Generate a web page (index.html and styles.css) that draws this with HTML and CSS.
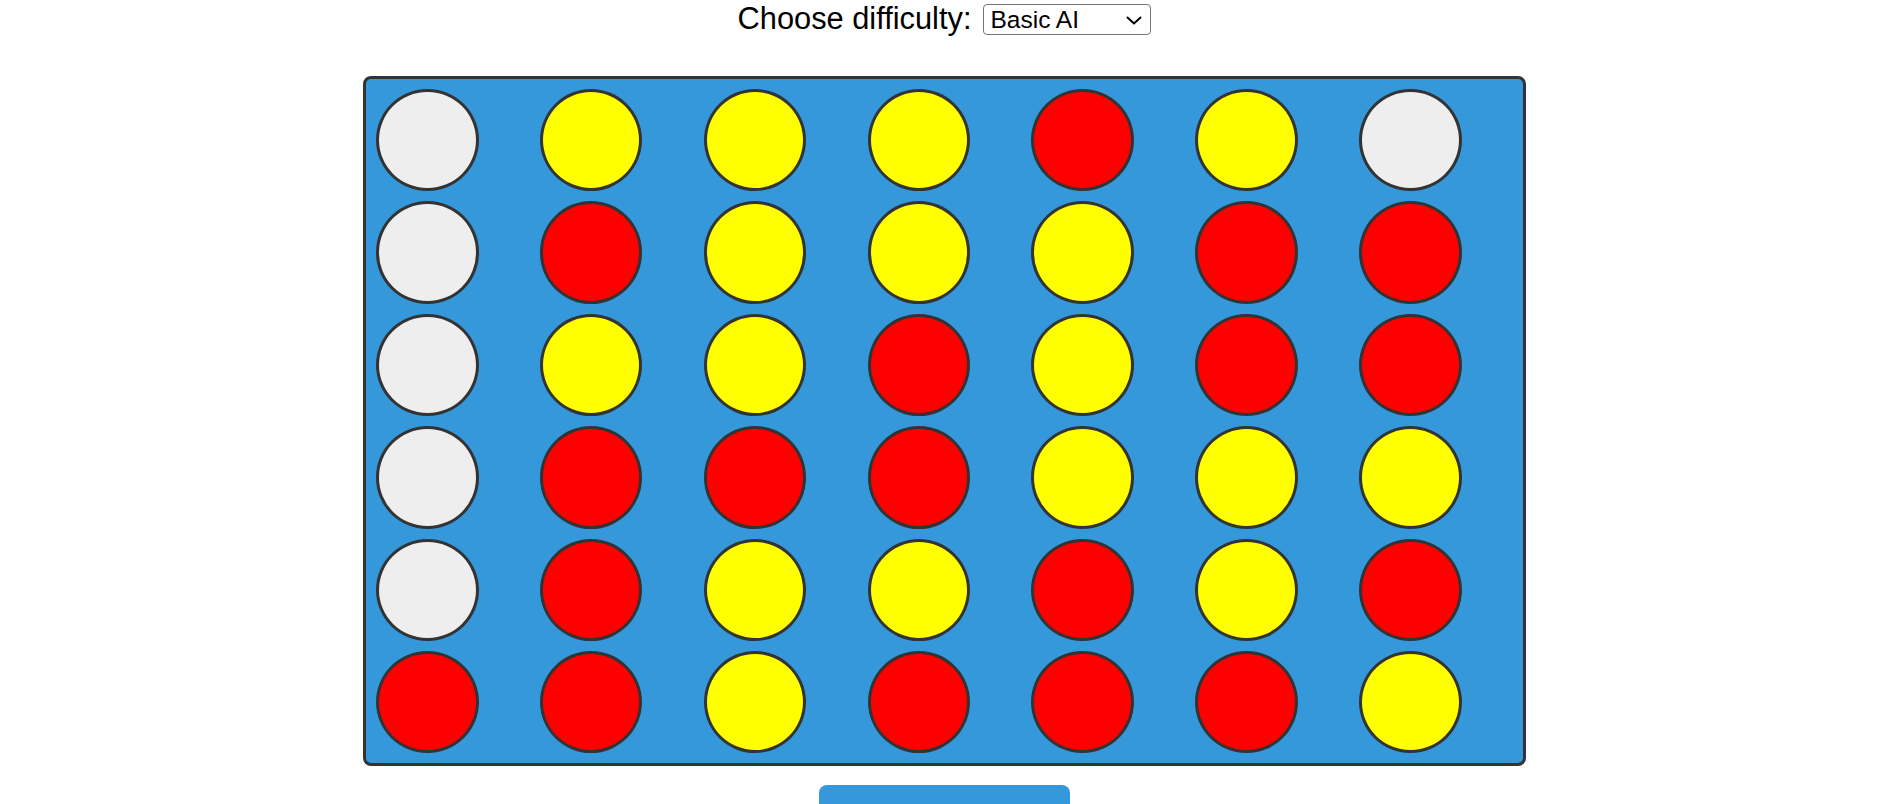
FILE: index.html
```html
<!DOCTYPE html>
<html lang="en">
<head>
<meta charset="utf-8">
<title>Connect Four</title>
<link rel="stylesheet" href="styles.css">
</head>
<body>
<div class="controls">
  <label class="label" for="difficulty">Choose difficulty:</label>
  <span class="select-wrap">
    <select id="difficulty" class="select">
      <option>Basic AI</option>
      <option>Advanced AI</option>
    </select>
    <svg class="chevron" width="16" height="9" viewBox="0 0 16 9" aria-hidden="true"><path d="M1.5 1.5 L8 7.5 L14.5 1.5" fill="none" stroke="#000" stroke-width="1.9" stroke-linecap="round" stroke-linejoin="round"/></svg>
  </span>
</div>
<div class="board">
  <div class="cell empty"></div><div class="cell yellow"></div><div class="cell yellow"></div><div class="cell yellow"></div><div class="cell red"></div><div class="cell yellow"></div><div class="cell empty"></div>
  <div class="cell empty"></div><div class="cell red"></div><div class="cell yellow"></div><div class="cell yellow"></div><div class="cell yellow"></div><div class="cell red"></div><div class="cell red"></div>
  <div class="cell empty"></div><div class="cell yellow"></div><div class="cell yellow"></div><div class="cell red"></div><div class="cell yellow"></div><div class="cell red"></div><div class="cell red"></div>
  <div class="cell empty"></div><div class="cell red"></div><div class="cell red"></div><div class="cell red"></div><div class="cell yellow"></div><div class="cell yellow"></div><div class="cell yellow"></div>
  <div class="cell empty"></div><div class="cell red"></div><div class="cell yellow"></div><div class="cell yellow"></div><div class="cell red"></div><div class="cell yellow"></div><div class="cell red"></div>
  <div class="cell red"></div><div class="cell red"></div><div class="cell yellow"></div><div class="cell red"></div><div class="cell red"></div><div class="cell red"></div><div class="cell yellow"></div>
</div>
<div class="actions">
  <button class="restart">Restart Game</button>
</div>
</body>
</html>
```

FILE: styles.css
```css
html, body {
  margin: 0;
  padding: 0;
  overflow: hidden;
  background: #ffffff;
}
body {
  font-family: "Liberation Sans", Arial, sans-serif;
  color: #000;
}
.controls {
  display: flex;
  justify-content: center;
  align-items: flex-start;
  gap: 12px;
  height: 35px;
}
.label {
  font-size: 30.8px;
  line-height: 34.5px;
  padding-top: 2px;
}
.select-wrap {
  position: relative;
  display: block;
  margin-top: 4px;
}
.select {
  display: block;
  -webkit-appearance: none;
  appearance: none;
  box-sizing: border-box;
  width: 168px;
  height: 31px;
  font-family: "Liberation Sans", Arial, sans-serif;
  font-size: 24.5px;
  border: 1px solid #767676;
  border-radius: 4px;
  background: #fff;
  color: #000;
  padding: 0 0 0 6px;
  margin: 0;
}
.chevron {
  position: absolute;
  right: 9px;
  top: 12px;
  pointer-events: none;
}
.board {
  box-sizing: border-box;
  width: 1163px;
  margin: 41px auto 0;
  padding: 10px;
  background: #3498db;
  border: 3px solid #333;
  border-radius: 8px;
  display: grid;
  grid-template-columns: repeat(7, 1fr);
  gap: 10px;
}
.cell {
  box-sizing: border-box;
  width: 102.6px;
  height: 102.4px;
  border: 3px solid #333;
  border-radius: 50%;
}
.empty { background: #eeeeee; }
.yellow { background: #ffff00; }
.red { background: #ff0000; }
.actions {
  display: flex;
  justify-content: center;
  margin-top: 19px;
}
.restart {
  width: 251px;
  padding: 34px 0 12px;
  background: #3498db;
  color: #fff;
  border: none;
  border-radius: 8px;
  font-family: "Liberation Sans", Arial, sans-serif;
  font-size: 20px;
}
```
